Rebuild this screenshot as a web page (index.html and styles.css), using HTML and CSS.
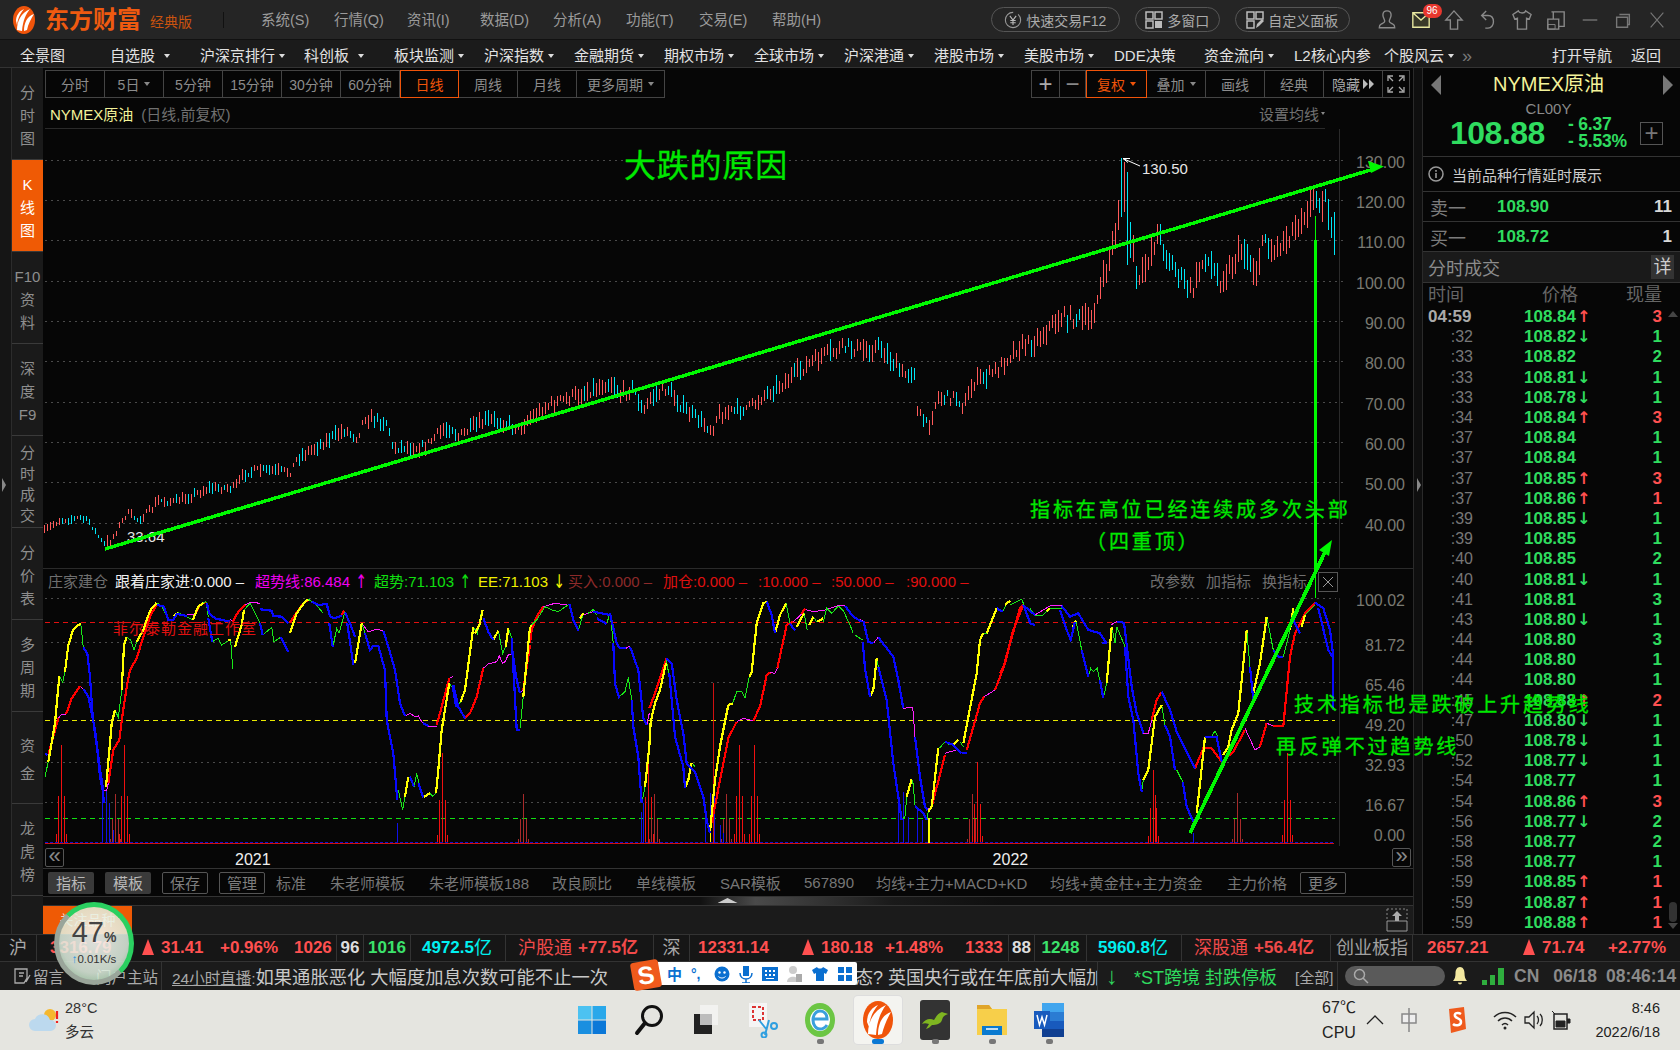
FILE: index.html
```html
<!DOCTYPE html>
<html lang="zh-CN">
<head>
<meta charset="utf-8">
<title>东方财富 经典版</title>
<link rel="stylesheet" href="styles.css">
</head>
<body>
<div class="shell">
  <header class="titlebar">
    <svg class="logo" viewBox="0 0 22 28"><ellipse cx="11" cy="14" rx="11" ry="14" fill="#f0540a"/><path d="M4 24C4 15 8 7 17 3C13 8 10 14 9 25Z M11 25C11 17 14 10 21 8C18 13 15 18 14 24Z M3 15C3 10 6 5 11 3C8 7 5 11 4 19Z" fill="#fff"/></svg>
    <span class="brand">东方财富</span>
    <span class="edition">经典版</span>
    <span class="title-sep"></span>
    <nav class="menu">
      <span>系统(S)</span><span>行情(Q)</span><span>资讯(I)</span><span>数据(D)</span><span>分析(A)</span><span>功能(T)</span><span>交易(E)</span><span>帮助(H)</span>
    </nav>
    <div class="title-right">
      <span class="pill pill-a"><svg viewBox="0 0 20 20" class="pill-ico"><circle cx="10" cy="10" r="8.5" fill="none" stroke="#999" stroke-width="1.2" stroke-dasharray="40 6"/><path d="M6.500 5.500L10 10l3.500-4.500M10 10v5.500M7 10.500h6M7 13h6" fill="none" stroke="#bbb" stroke-width="1.200"/></svg>快速交易F12</span>
      <span class="pill pill-b"><svg viewBox="0 0 18 18" class="pill-ico"><path d="M1 1h7v7H1zM10 1h7v7h-7zM1 10h7v7H1z" fill="none" stroke="#bbb" stroke-width="1.500"/><path d="M10 10h7v7h-7z" fill="#bbb"/></svg>多窗口</span>
      <span class="pill pill-c"><svg viewBox="0 0 18 18" class="pill-ico"><path d="M1 1h7v7H1zM10 1h7v7h-7zM1 10h7v7H1z" fill="none" stroke="#bbb" stroke-width="1.500"/><path d="M10 17l1-4 5-5 2 2-5 5z" fill="#bbb"/></svg>自定义面板</span>
      <div class="win-icons">
        <span class="wi"><svg viewBox="0 0 22 24"><path d="M11 2c-3 0-4.500 2-4.500 4.500 0 3 2 4.500 2 7 0 1.500-2 2-4 3-1.500.7-2 2-2 4h17c0-2-.5-3.300-2-4-2-1-4-1.500-4-3 0-2.500 2-4 2-7C15.500 4 14 2 11 2z" fill="none" stroke="#8a8a8a" stroke-width="1.500"/></svg></span>
        <span class="wi"><svg viewBox="0 0 22 22"><path d="M2 3h18v16H2zM2 3l9 8 9-8" fill="#3a3a2a" stroke="#e8e8a0" stroke-width="1.500"/></svg><b class="badge">96</b></span>
        <span class="wi"><svg viewBox="0 0 22 24"><path d="M11 2L2 12h5v10h8V12h5z" fill="none" stroke="#8a8a8a" stroke-width="1.500"/></svg></span>
        <span class="wi"><svg viewBox="0 0 22 24"><path d="M9 2L4 7l5 5M4 7h7c5 0 6 4 6 7s-2 7-6 7H8" fill="none" stroke="#8a8a8a" stroke-width="1.500"/></svg></span>
        <span class="wi"><svg viewBox="0 0 22 24"><path d="M7 2L1 6l2 5 3-1v12h10V10l3 1 2-5-6-4c-.5 3-7 3-8 0z" fill="none" stroke="#8a8a8a" stroke-width="1.500"/></svg></span>
        <span class="wi"><svg viewBox="0 0 22 24"><path d="M8 3h12v16h-6M2 11h12v11H2zM6 3h2v8" fill="none" stroke="#8a8a8a" stroke-width="1.500"/><path d="M2 17h8v5H2z" fill="none" stroke="#8a8a8a"/></svg></span>
        <span class="wi"><svg viewBox="0 0 22 24"><path d="M3 12h16" stroke="#777" stroke-width="1.500"/></svg></span>
        <span class="wi"><svg viewBox="0 0 22 24"><path d="M7 6h11v11h-2M4 9h12v11H4z" fill="none" stroke="#777" stroke-width="1.500"/></svg></span>
        <span class="wi"><svg viewBox="0 0 22 24"><path d="M4 4l14 16M18 4L4 20" stroke="#777" stroke-width="1.200"/></svg></span>
      </div>
    </div>
  </header>

  <nav class="navbar">
    <span class="nv">全景图</span><span class="nv">自选股<i class="dd"></i></span><span class="nv nv-w">沪深京排行<i class="dd dd-n"></i></span><span class="nv">科创板<i class="dd"></i></span><span class="nv">板块监测<i class="dd dd-n"></i></span><span class="nv">沪深指数<i class="dd dd-n"></i></span><span class="nv">金融期货<i class="dd dd-n"></i></span><span class="nv">期权市场<i class="dd dd-n"></i></span><span class="nv">全球市场<i class="dd dd-n"></i></span><span class="nv">沪深港通<i class="dd dd-n"></i></span><span class="nv">港股市场<i class="dd dd-n"></i></span><span class="nv">美股市场<i class="dd dd-n"></i></span><span class="nv">DDE决策</span><span class="nv">资金流向<i class="dd dd-n"></i></span><span class="nv">L2核心内参</span><span class="nv nv-s">个股风云<i class="dd dd-n"></i></span><span class="nv-more">»</span>
    <span class="nv-right">打开导航</span><span class="nv-right nv-back">返回</span>
  </nav>

  <div class="workspace">
    <div class="edge"><i class="handle"></i></div>
    <aside class="rail">
      <div class="rc"><span>分</span><span>时</span><span>图</span></div>
      <div class="rc rc-on"><span>K</span><span>线</span><span>图</span></div>
      <div class="rc"><span>F10</span><span>资</span><span>料</span></div>
      <div class="rc"><span>深</span><span>度</span><span>F9</span></div>
      <div class="rc rc-4"><span>分</span><span>时</span><span>成</span><span>交</span></div>
      <div class="rc"><span>分</span><span>价</span><span>表</span></div>
      <div class="rc"><span>多</span><span>周</span><span>期</span></div>
      <div class="rc rc-2"><span>资</span><span>金</span></div>
      <div class="rc"><span>龙</span><span>虎</span><span>榜</span></div>
    </aside>

    <main class="main">
      <div class="toolbar">
        <div class="tgroup">
          <span class="tb">分时</span><span class="tb">5日<i class="dd dd-g"></i></span><span class="tb">5分钟</span><span class="tb">15分钟</span><span class="tb">30分钟</span><span class="tb">60分钟</span><span class="tb tb-on">日线</span><span class="tb">周线</span><span class="tb">月线</span><span class="tb tb-more">更多周期<i class="dd dd-g"></i></span>
        </div>
        <div class="tgroup">
          <span class="tb tb-plus">+</span><span class="tb tb-minus">−</span><span class="tb tb-on tb-fq">复权<i class="dd dd-o"></i></span><span class="tb">叠加<i class="dd dd-g"></i></span><span class="tb">画线</span><span class="tb">经典</span><span class="tb tb-hide">隐藏<svg class="ff" viewBox="0 0 11 10" width="11" height="10"><path d="M0 0l5 5-5 5zM6 0l5 5-5 5z" fill="#bbb"/></svg></span>
          <span class="tb tb-full"><svg viewBox="0 0 18 18" width="18" height="18"><path d="M1 6V1h5M12 1h5v5M17 12v5h-5M6 17H1v-5M2 2l4 4M16 2l-4 4M16 16l-4-4M2 16l4-4" fill="none" stroke="#aaa" stroke-width="1.300"/></svg></span>
        </div>
      </div>
      <div class="chart-head">
        <span class="sym">NYMEX原油</span><span class="sym-sub">(日线,前复权)</span>
        <span class="ma-set">设置均线<i class="dd dd-g dd-s"></i></span>
      </div>

      <svg id="price" class="price" viewBox="43 129 1370 439" width="1370" height="439">
        <g class="grid">
          <path d="M45 160.500H1343M45 200.500H1343M45 240.500H1343M45 281.500H1343M45 321.500H1343M45 361.500H1343M45 402.500H1343M45 442.500H1343M45 482.500H1343M45 523.500H1343"/>
        </g>
        <path class="axis-line" d="M1339.500 129V568"/>
        <g class="axis">
          <text x="1405" y="168">130.00</text><text x="1405" y="208">120.00</text><text x="1405" y="248">110.00</text><text x="1405" y="289">100.00</text><text x="1405" y="329">90.00</text><text x="1405" y="369">80.00</text><text x="1405" y="410">70.00</text><text x="1405" y="450">60.00</text><text x="1405" y="490">50.00</text><text x="1405" y="531">40.00</text>
        </g>
        <g id="candles"></g>
        <path class="hl-arrow" d="M1140 166L1123 158.500M1123 158.500l7 0M1123 158.500l5 4"/>
        <text class="hl-val" x="1142" y="174">130.50</text>
        <text class="hl-val" x="127" y="542">33.64</text>
      </svg>

      <div class="ind-head">
        <span class="ih ih-name">庄家建仓</span>
        <span class="ih ih-w">跟着庄家进:0.000 –</span>
        <span class="ih ih-m">超势线:86.484 <b>↑</b></span>
        <span class="ih ih-g">超势:71.103 <b>↑</b></span>
        <span class="ih ih-y">EE:71.103 <b>↓</b></span>
        <span class="ih ih-d">买入:0.000 –</span>
        <span class="ih ih-r">加仓:0.000 –</span>
        <span class="ih ih-p1">:10.000 –</span>
        <span class="ih ih-p2">:50.000 –</span>
        <span class="ih ih-p3">:90.000 –</span>
        <span class="ih-acts"><span>改参数</span><span>加指标</span><span>换指标</span></span>
        <span class="ih-x"><svg viewBox="0 0 12 12" width="12" height="12"><path d="M1 1l10 10M11 1L1 11" stroke="#999" stroke-width="1"/></svg></span>
      </div>

      <svg id="ind" class="ind" viewBox="43 598 1370 248" width="1370" height="248">
        <g class="grid">
          <path d="M45 598.500H1336M45 642.500H1336M45 682.500H1336M45 762.500H1336M45 802.500H1336"/>
        </g>
        <path class="axis-line" d="M1339.500 598V846"/>
        <path class="d-red" d="M45 622.500H1335"/>
        <path class="d-yel" d="M45 720.500H1335"/>
        <path class="d-grn" d="M45 818.500H1335"/>
        <g class="axis">
          <text x="1405" y="606">100.02</text><text x="1405" y="651">81.72</text><text x="1405" y="691">65.46</text><text x="1405" y="731">49.20</text><text x="1405" y="771">32.93</text><text x="1405" y="811">16.67</text><text x="1405" y="841">0.00</text>
        </g>
        <g id="spikes"></g>
        <g id="lines"></g>
        <path class="base-b" d="M45 842.500H1334"/>
        <path class="base-r" d="M45 843.500H1334"/>
        <text class="ind-note" x="113" y="634">菲尔泰勒金融工作室</text>
      </svg>

      <div class="date-row">
        <span class="pg">«</span>
        <span class="yr yr-a">2021</span>
        <span class="yr yr-b">2022</span>
        <span class="pg pg-r">»</span>
      </div>

      <div class="tpl">
        <span class="tp tp-on">指标</span><span class="tp tp-on">模板</span><span class="tp tp-bd">保存</span><span class="tp tp-bd">管理</span>
        <span class="tt t1">标准</span><span class="tt t2">朱老师模板</span><span class="tt t3">朱老师模板188</span><span class="tt t4">改良顾比</span><span class="tt t5">单线模板</span><span class="tt t6">SAR模板</span><span class="tt t7">567890</span><span class="tt t8">均线+主力+MACD+KD</span><span class="tt t9">均线+黄金柱+主力资金</span><span class="tt t10">主力价格</span>
        <span class="tp tp-bd tp-more">更多</span>
      </div>
      <div class="strip"><i class="strip-arrow"></i></div>
      <div class="subpanel">
        <span class="sub-tab">关注品种</span>
        <svg class="sub-ico" viewBox="0 0 22 24" width="22" height="24"><path d="M1 1h20M1 1v10M21 1v10" fill="none" stroke="#888" stroke-dasharray="2 2"/><path d="M1 13h20v10H1z" fill="none" stroke="#999"/><path d="M11 3l-5 5h3v5h4V8h3z" fill="#aaa"/></svg>
      </div>
    </main>

    <div class="edge edge-r"><i class="handle"></i></div>

    <aside class="quote">
      <div class="q-head">
        <div class="q-name"><i class="tri tri-l"></i><span>NYMEX原油</span><i class="tri tri-r"></i></div>
        <div class="q-code">CL00Y</div>
        <div class="q-price">
          <span class="q-last">108.88</span>
          <span class="q-delta"><span>- 6.37</span><span>- 5.53%</span></span>
          <span class="q-add">+</span>
        </div>
      </div>
      <div class="q-info"><svg viewBox="0 0 16 16" width="16" height="16"><circle cx="8" cy="8" r="7" fill="none" stroke="#999" stroke-width="1.500"/><path d="M8 4v1.800M8 7v5" stroke="#999" stroke-width="1.600"/></svg>当前品种行情延时展示</div>
      <div class="q-book"><span class="bk">卖一</span><span class="bp">108.90</span><span class="bq">11</span></div>
      <div class="q-book"><span class="bk">买一</span><span class="bp">108.72</span><span class="bq">1</span></div>
      <div class="q-title">分时成交<span class="q-det">详</span></div>
      <div class="q-cols"><span>时间</span><span>价格</span><span>现量</span></div>
      <div class="trades">
        <div class="tr tr-first"><span class="t">04:59</span><span class="p">108.84</span><span class="a u">↑</span><span class="n u">3</span></div>
        <div class="tr"><span class="t">:32</span><span class="p">108.82</span><span class="a">↓</span><span class="n">1</span></div>
        <div class="tr"><span class="t">:33</span><span class="p">108.82</span><span class="a"></span><span class="n">2</span></div>
        <div class="tr"><span class="t">:33</span><span class="p">108.81</span><span class="a">↓</span><span class="n">1</span></div>
        <div class="tr"><span class="t">:33</span><span class="p">108.78</span><span class="a">↓</span><span class="n">1</span></div>
        <div class="tr"><span class="t">:34</span><span class="p">108.84</span><span class="a u">↑</span><span class="n u">3</span></div>
        <div class="tr"><span class="t">:37</span><span class="p">108.84</span><span class="a"></span><span class="n">1</span></div>
        <div class="tr"><span class="t">:37</span><span class="p">108.84</span><span class="a"></span><span class="n">1</span></div>
        <div class="tr"><span class="t">:37</span><span class="p">108.85</span><span class="a u">↑</span><span class="n u">3</span></div>
        <div class="tr"><span class="t">:37</span><span class="p">108.86</span><span class="a u">↑</span><span class="n u">1</span></div>
        <div class="tr"><span class="t">:39</span><span class="p">108.85</span><span class="a">↓</span><span class="n">1</span></div>
        <div class="tr"><span class="t">:39</span><span class="p">108.85</span><span class="a"></span><span class="n">1</span></div>
        <div class="tr"><span class="t">:40</span><span class="p">108.85</span><span class="a"></span><span class="n">2</span></div>
        <div class="tr"><span class="t">:40</span><span class="p">108.81</span><span class="a">↓</span><span class="n">1</span></div>
        <div class="tr"><span class="t">:41</span><span class="p">108.81</span><span class="a"></span><span class="n">3</span></div>
        <div class="tr"><span class="t">:43</span><span class="p">108.80</span><span class="a">↓</span><span class="n">1</span></div>
        <div class="tr"><span class="t">:44</span><span class="p">108.80</span><span class="a"></span><span class="n">3</span></div>
        <div class="tr"><span class="t">:44</span><span class="p">108.80</span><span class="a"></span><span class="n">1</span></div>
        <div class="tr"><span class="t">:44</span><span class="p">108.80</span><span class="a"></span><span class="n">1</span></div>
        <div class="tr"><span class="t">:45</span><span class="p">108.88</span><span class="a u">↑</span><span class="n u">2</span></div>
        <div class="tr"><span class="t">:47</span><span class="p">108.80</span><span class="a">↓</span><span class="n">1</span></div>
        <div class="tr"><span class="t">:50</span><span class="p">108.78</span><span class="a">↓</span><span class="n">1</span></div>
        <div class="tr"><span class="t">:52</span><span class="p">108.77</span><span class="a">↓</span><span class="n">1</span></div>
        <div class="tr"><span class="t">:54</span><span class="p">108.77</span><span class="a"></span><span class="n">1</span></div>
        <div class="tr"><span class="t">:54</span><span class="p">108.86</span><span class="a u">↑</span><span class="n u">3</span></div>
        <div class="tr"><span class="t">:56</span><span class="p">108.77</span><span class="a">↓</span><span class="n">2</span></div>
        <div class="tr"><span class="t">:58</span><span class="p">108.77</span><span class="a"></span><span class="n">2</span></div>
        <div class="tr"><span class="t">:58</span><span class="p">108.77</span><span class="a"></span><span class="n">1</span></div>
        <div class="tr"><span class="t">:59</span><span class="p">108.85</span><span class="a u">↑</span><span class="n u">1</span></div>
        <div class="tr"><span class="t">:59</span><span class="p">108.87</span><span class="a u">↑</span><span class="n u">1</span></div>
        <div class="tr"><span class="t">:59</span><span class="p">108.88</span><span class="a u">↑</span><span class="n u">1</span></div>
        <i class="sb-up"></i><i class="sb-thumb"></i><i class="sb-dn"></i>
      </div>
    </aside>
  </div>

  <div class="status">
    <div class="sc sc-mk">沪</div>
    <div class="sc sc-idx"><span class="v1 r">3316.79</span><span class="v2 r"><i class="up"></i>31.41</span><span class="v3 r">+0.96%</span><span class="r">1026</span></div>
    <div class="sc sc-mid">96</div>
    <div class="sc sc-dn">1016</div>
    <div class="sc sc-amt">4972.5<em>亿</em></div>
    <div class="sc sc-north">沪股通<b>+77.5亿</b></div>
    <div class="sc sc-mk">深</div>
    <div class="sc sc-idx"><span class="v1b r">12331.14</span><span class="v2b r"><i class="up"></i>180.18</span><span class="v3b r">+1.48%</span><span class="r">1333</span></div>
    <div class="sc sc-mid">88</div>
    <div class="sc sc-dn">1248</div>
    <div class="sc sc-amt">5960.8<em>亿</em></div>
    <div class="sc sc-north">深股通<b>+56.4亿</b></div>
    <div class="sc sc-cy">创业板指</div>
    <div class="sc sc-idx sc-last"><span class="v1c r">2657.21</span><span class="v2c r"><i class="up"></i>71.74</span><span class="r">+2.77%</span></div>
  </div>

  <div class="ticker">
    <div class="tk-links"><svg viewBox="0 0 18 18" width="18" height="18"><path d="M2 2h12v9l-3 5H2zM6 6h5M6 9h4M13 15l4-7" fill="none" stroke="#aaa" stroke-width="1.300"/></svg><span>留言</span><span class="tk-home">门户主站</span></div>
    <div class="tk-news"><u>24小时直播</u>:<span class="tk-big">如果通胀恶化 大幅度加息次数可能不止一次</span></div>
    <div class="tk-news2">态? 英国央行或在年底前大幅加</div>
    <div class="tk-alert"><b class="ar">↓</b><span class="al-t">*ST跨境 封跌停板</span><span class="al-all">[全部]</span></div>
    <div class="tk-tools">
      <span class="search"><svg viewBox="0 0 16 16" width="16" height="16"><circle cx="6.500" cy="6.500" r="5" fill="none" stroke="#aaa" stroke-width="1.500"/><path d="M10 10l5 5" stroke="#aaa" stroke-width="1.500"/></svg></span>
      <svg class="bell" viewBox="0 0 16 20" width="16" height="20"><path d="M8 1c-3 0-4.500 3-4.500 6S3 13 1 15h14c-2-2-2.500-5-2.500-8S11 1 8 1zM6 16.500a2 2 0 0 0 4 0z" fill="#f3e8a0"/></svg>
      <svg class="sig" viewBox="0 0 22 18" width="22" height="18"><path d="M0 13h5v5H0zM8 8h5v10H8zM16 1h6v17h-6z" fill="#2fae3e"/></svg>
      <span class="clk cn">CN</span><span class="clk">06/18</span><span class="clk">08:46:14</span>
    </div>
  </div>

  <footer class="taskbar">
    <div class="weather">
      <svg viewBox="0 0 34 26" width="34" height="26"><circle cx="23" cy="8" r="6" fill="#f5b82e"/><path d="M8 24a6 6 0 0 1 0-12 8 8 0 0 1 15 1 5.500 5.500 0 0 1 1 11z" fill="#bcd9ee"/><path d="M30 4v8M30 14v2" stroke="#e22" stroke-width="2.200"/></svg>
      <div class="w-text"><span>28°C</span><span>多云</span></div>
    </div>
    <div class="apps">
      <span class="tapp"><svg viewBox="0 0 30 30" width="30" height="30"><path d="M1 1h13.500v13.500H1z" fill="#4cc2f1"/><path d="M15.500 1H29v13.500H15.500z" fill="#29a8ea"/><path d="M1 15.500h13.500V29H1z" fill="#1a8fe0"/><path d="M15.500 15.500H29V29H15.500z" fill="#0b78d8"/></svg></span>
      <span class="tapp"><svg viewBox="0 0 30 32" width="30" height="32"><circle cx="18" cy="12" r="9.500" fill="none" stroke="#111" stroke-width="3"/><path d="M11 19L3 29" stroke="#111" stroke-width="4" stroke-linecap="round"/></svg></span>
      <span class="tapp"><svg viewBox="0 0 30 32" width="30" height="32"><path d="M9 1h18v20H9z" fill="#f2f2f0"/><path d="M3 10h18v20H3z" fill="#222"/><path d="M9 10h12v11H9z" fill="#bdbdbd"/></svg></span>
      <span class="tapp"><svg viewBox="0 0 32 36" width="32" height="36"><path d="M2 1h18v24H2z" fill="#f5f5f5"/><path d="M6 5h10v13H6z" fill="none" stroke="#d33" stroke-width="2" stroke-dasharray="3 2"/><path d="M12 18l8 10M22 18l-4 15" stroke="#2f9fe0" stroke-width="2"/><circle cx="27" cy="24" r="3" fill="none" stroke="#2f9fe0" stroke-width="2"/><circle cx="17" cy="33" r="2.500" fill="none" stroke="#2f9fe0" stroke-width="2"/></svg></span>
      <span class="tapp tapp-dot"><svg viewBox="0 0 32 36" width="32" height="36"><ellipse cx="16" cy="18" rx="15" ry="17" fill="#6cc644"/><ellipse cx="16" cy="18" rx="10" ry="11" fill="#fff"/><path d="M9 17h14c0-5-3-8-7-8s-7 4-7 9 3 9 7 9c3 0 5-1 7-4" fill="none" stroke="#3aa0dc" stroke-width="3"/></svg></span>
      <span class="tapp tapp-active"><svg viewBox="0 0 30 38" width="30" height="38"><ellipse cx="15" cy="19" rx="15" ry="19" fill="#f0540a"/><path d="M5 33C5 20 11 9 23 4C18 11 14 19 13 34Z M15 34C15 23 19 14 28 11C24 18 21 25 19 33Z M4 21C4 13 8 7 15 4C11 9 7 15 6 26Z" fill="#fff"/></svg></span>
      <span class="tapp tapp-dot"><svg viewBox="0 0 30 40" width="30" height="40"><rect width="30" height="40" rx="3" fill="#333"/><path d="M2 24c3-5 8-6 12-4 2-3 4-7 8-8 1 1 5 1 6 2-3 1-5 2-6 6-1 4-6 5-10 5-2 2-3 3-6 4 1-2 2-3 3-5-3-1-5-1-7 0z" fill="#7fb521"/></svg></span>
      <span class="tapp tapp-dot"><svg viewBox="0 0 32 36" width="32" height="36"><path d="M1 3h12l3 4h15v26H1z" fill="#f7cf4a"/><path d="M1 3h12l3 4H1z" fill="#e0a52a"/><path d="M6 24h20v9H6z" fill="#0a7ad0"/><path d="M10 27h12" stroke="#fff" stroke-width="1.500"/></svg></span>
      <span class="tapp tapp-dot"><svg viewBox="0 0 32 36" width="32" height="36"><path d="M9 1h22v34H9z" fill="#2b7cd3"/><path d="M9 1h22v9H9z" fill="#41a5ee"/><path d="M9 19h22v8H9z" fill="#185abd"/><path d="M9 27h22v8H9z" fill="#103f91"/><path d="M1 9h16v18H1z" fill="#185abd"/><path d="M4 13l2.500 10L9 15l2.500 8L14 13" fill="none" stroke="#fff" stroke-width="1.500"/></svg></span>
    </div>
    <div class="tray">
      <div class="cpu"><span>67℃</span><span>CPU</span></div>
      <svg class="tr-ic chev" viewBox="0 0 18 10" width="18" height="10"><path d="M1 9l8-8 8 8" fill="none" stroke="#222" stroke-width="1.300"/></svg>
      <svg class="tr-ic zh" viewBox="0 0 18 26" width="18" height="26"><path d="M9 1v24M2 7h14v9H2z" fill="#eee" stroke="#888" stroke-width="1.500"/></svg>
      <svg class="tr-ic sg" viewBox="0 0 20 26" width="20" height="26"><path d="M3 2l15-2 2 22-15 4z" fill="#ef5a1c"/><path d="M15 7c-3-2-7-1-6 2s6 2 6 6-6 4-8 2" fill="none" stroke="#fff" stroke-width="2.500"/></svg>
      <svg class="tr-ic wf" viewBox="0 0 24 20" width="24" height="20"><path d="M1 7c6-6 16-6 22 0M5 11c4-4 10-4 14 0M9 15c2-2 4-2 6 0" fill="none" stroke="#222" stroke-width="1.500"/><circle cx="12" cy="18" r="1.500" fill="#222"/></svg>
      <svg class="tr-ic sp" viewBox="0 0 20 20" width="20" height="20"><path d="M1 7h4l5-5v16l-5-5H1zM13 6c2 2 2 6 0 8M16 4c3 3 3 9 0 12" fill="none" stroke="#222" stroke-width="1.300"/></svg>
      <svg class="tr-ic bt" viewBox="0 0 22 22" width="22" height="22"><path d="M4 5h13v15H4z" fill="none" stroke="#222" stroke-width="1.500"/><path d="M6 12h9v6H6zM2 2l3 3M17 10h3v4h-3" fill="#222" stroke="#222"/></svg>
      <div class="clock"><span>8:46</span><span>2022/6/18</span></div>
    </div>
  </footer>

  <svg class="overlay" viewBox="0 0 1680 1050" width="1680" height="1050">
    <text class="note note-t" x="624" y="177">大跌的原因</text>
    <path class="trend" d="M105 549L1374 169"/>
    <path class="trend-h" d="M1384 166.500L1368 161l3 12z"/>
    <path class="vert-t" d="M1315.500 216V240M1315.500 570V598"/>
    <path class="vert" d="M1315.500 240V570"/>
    <path class="trend2" d="M1190 833L1326 550"/>
    <path class="trend-h" d="M1332 540L1319 550l10 6z"/>
    <text class="note" x="1030" y="517">指标在高位已经连续成多次头部</text>
    <text class="note" x="1086" y="549">（四重顶）</text>
    <text class="note" x="1294" y="712">技术指标也是跌破上升趋势线</text>
    <text class="note" x="1276" y="754">再反弹不过趋势线</text>
  </svg>

  <div class="gauge">
    <div class="g-pct">47<small>%</small></div>
    <div class="g-net"><b>↑</b>0.01K/s</div>
  </div>

  <div class="ime">
    <span class="ime-s">S</span>
    <span class="ime-bar">
      <b class="ime-z">中</b><b class="ime-p">°,</b>
      <svg viewBox="0 0 16 16" width="16" height="16"><circle cx="8" cy="8" r="7.500" fill="#0a6fd0"/><circle cx="5.500" cy="6.500" r="1.200" fill="#fff"/><circle cx="10.500" cy="6.500" r="1.200" fill="#fff"/><path d="M4.500 10.500c2 2 5 2 7 0" stroke="#fff" fill="none"/></svg>
      <svg viewBox="0 0 14 18" width="14" height="18"><path d="M4 1h6v10H4z" fill="#0a6fd0"/><path d="M1 8c0 8 12 8 12 0M7 14v4M3 18h8" stroke="#0a6fd0" fill="none" stroke-width="1.500"/></svg>
      <svg viewBox="0 0 16 16" width="16" height="16"><path d="M0 1h16v14H0z" fill="#0a6fd0"/><path d="M3 4h2v2H3zM7 4h2v2H7zM11 4h2v2h-2zM3 8h2v2H3zM7 8h2v2H7zM11 8h2v2h-2zM4 12h8v1H4z" fill="#fff"/></svg>
      <svg viewBox="0 0 16 18" width="16" height="18"><circle cx="6" cy="5" r="4" fill="#ccc"/><path d="M0 17c0-7 12-7 12 0z" fill="#ccc"/><path d="M9 9h6v8H9z" fill="#aaa"/></svg>
      <svg viewBox="0 0 16 16" width="16" height="16"><path d="M5 1L0 4l2 4 2-1v8h8V7l2 1 2-4-5-3c-1 2-5 2-6 0z" fill="#0a6fd0"/></svg>
      <svg viewBox="0 0 16 16" width="16" height="16"><path d="M1 1h6v6H1zM9 1h6v6H9zM1 9h6v6H1zM9 9h6v6H9z" fill="#0a6fd0"/></svg>
    </span>
  </div>
</div>
<script src="chart.js"></script>
</body>
</html>
```

FILE: styles.css
```css
*{box-sizing:border-box}
html,body{margin:0;height:100%;background:#060606}
body{font-family:"Liberation Sans","Noto Sans CJK SC",sans-serif;color:#aaa;overflow:hidden}
.shell{position:relative;width:1680px;height:1050px;display:flex;flex-direction:column;overflow:hidden}
i,em{font-style:normal}

/* title */
.titlebar{height:40px;flex:none;display:flex;align-items:center;padding-left:13px;background:#252525;border-bottom:1px solid #111}
.logo{width:22px;height:28px;flex:none}
.brand{margin-left:10px;width:95px;font-size:24px;line-height:30px;font-weight:700;color:#ef5a10;white-space:nowrap}
.edition{margin-left:10px;font-size:14px;line-height:20px;color:#c9530f;padding-top:4px;width:43px;white-space:nowrap}
.title-sep{margin-left:30px;width:1px;height:16px;background:#111}
.menu{margin-left:37px;display:flex;font-size:14.500px;line-height:20px;color:#9b9b9b;white-space:nowrap}
.menu span{width:73px;flex:none}
.title-right{margin-left:auto;display:flex;align-items:center;padding-right:6px}
.pill{height:25px;border:1px solid #555;border-radius:13px;display:flex;align-items:center;justify-content:center;gap:4px;font-size:14px;color:#aaa;white-space:nowrap}
.pill-a{width:129px}
.pill-b{width:85px;margin-left:15px}
.pill-c{width:115px;margin-left:15px}
.pill-ico{width:18px;height:18px;flex:none}
.win-icons{display:flex;margin-left:20px}
.wi{position:relative;width:33.800px;height:30px;display:flex;align-items:center;justify-content:center}
.wi svg{width:20px;height:22px}
.badge{position:absolute;left:19px;top:-1px;min-width:19px;height:14px;border-radius:7px;background:#e8372e;color:#fff;font-size:10px;font-weight:400;line-height:14px;text-align:center}

/* nav */
.navbar{height:28px;flex:none;display:flex;align-items:center;padding-left:20px;padding-top:5px;background:#1b1b1b;border-bottom:1px solid #333;font-size:15px;line-height:20px;color:#e2e2e2;white-space:nowrap}
.nv{width:90px;flex:none;display:flex;align-items:center}
.nv-w{width:104px}
.nv-s{width:78px}
.nv-more{color:#777;font-size:18px;width:90px}
.nv-right{width:79px}
.nv-back{width:auto}
.dd{display:inline-block;width:0;height:0;margin-left:9px;border-left:3.500px solid transparent;border-right:3.500px solid transparent;border-top:4px solid #ddd}
.dd-n{margin-left:4px}
.dd-g{border-top-color:#888;margin-left:5px}
.dd-o{border-top-color:#f0540a;margin-left:5px}
.dd-s{margin-left:2px;border-left-width:2.500px;border-right-width:2.500px;border-top-width:3px}

/* workspace */
.workspace{height:866px;flex:none;display:flex;background:#060606}
.edge{width:11px;flex:none;background:#151515;display:flex;align-items:center;justify-content:flex-start}
.edge-r{width:9px;background:#0f0f0f;border-left:1px solid #2a2a2a;justify-content:center}
.handle{display:block;width:4px;height:14px;margin:0 0 0 2px;background:#888;clip-path:polygon(0 0,100% 50%,0 100%);margin-top:-32px}
.rail{width:32px;flex:none;background:#1a1a1a;border-left:1px solid #2c2c2c;display:flex;flex-direction:column}
.rc{height:92px;flex:none;display:flex;flex-direction:column;align-items:center;justify-content:center;padding-top:4px;border-bottom:1px solid #3a3a3a;font-size:15px;line-height:23px;color:#8e8e8e}
.rc span{height:23px}
.rc-on{background:#ef5a05;color:#fff}
.rc-4{line-height:21px}
.rc-4 span{height:21px}
.rc-2 span{height:28px;line-height:28px}
.main{width:1370px;flex:none;display:flex;flex-direction:column;background:#060606;overflow:hidden}

.toolbar{height:28px;margin-top:2px;flex:none;display:flex;justify-content:space-between;padding:0 3px 0 2px}
.tgroup{display:flex;border:1px solid #444}
.tb{width:59px;display:flex;align-items:center;justify-content:center;border-right:1px solid #444;font-size:14px;color:#8c8c8c;white-space:nowrap}
.tb:last-child{border-right:0}
.tb-more{width:87px}
.tb-on{border:1px solid #f0540a;color:#f0540a;margin:-1px 0}
.tb-plus{width:28px;font-size:24px;font-weight:300;color:#aaa}
.tb-minus{width:26px;font-size:24px;color:#888}
.tb-fq{width:61px}
.tb-hide{width:59px;color:#aaa}
.ff{flex:none;margin-left:3px}
.tb-full{width:26px}

.chart-head{height:31px;flex:none;margin:0 88px 0 2px;display:flex;align-items:center;border-bottom:1px solid #2a2a2a;padding-left:5px;font-size:15px;white-space:nowrap}
.sym{color:#f3f39a;font-size:15px}
.sym-sub{margin-left:8px;color:#707070}
.ma-set{margin-left:auto;color:#707070;margin-right:0;display:flex;align-items:center}

.price{display:block;flex:none;overflow:visible}
.ind{display:block;flex:none;overflow:visible}
.grid path{stroke:#4a4a4a;stroke-width:1;stroke-dasharray:2 4;fill:none;shape-rendering:crispEdges}
.axis-line{stroke:#2a2a2a;stroke-width:1;shape-rendering:crispEdges}
.axis text{fill:#7a7a72;font-size:16px;text-anchor:end}
.hl-arrow{stroke:#fff;stroke-width:1;fill:none}
.hl-val{fill:#e6e6e6;font-size:15px}
.d-red{stroke:#e01010;stroke-dasharray:5 4;stroke-width:1;shape-rendering:crispEdges}
.d-yel{stroke:#e8e800;stroke-dasharray:5 4;stroke-width:1;shape-rendering:crispEdges}
.d-grn{stroke:#10e010;stroke-dasharray:5 4;stroke-width:1;shape-rendering:crispEdges}
.base-b{stroke:#1010d0;stroke-width:1;stroke-dasharray:3 2;shape-rendering:crispEdges}
.base-r{stroke:#d01010;stroke-width:1;shape-rendering:crispEdges}
.ind-note{fill:#e01010;font-size:15px;letter-spacing:1px}

.ind-head{height:30px;flex:none;display:flex;align-items:center;border-top:1px solid #2a2a2a;font-size:15px;line-height:20px;white-space:nowrap;padding:0 75px 4px 5px}
.ih b{font-family:"DejaVu Sans",sans-serif;font-weight:400;font-size:17px;line-height:16px;display:inline-block;transform:scale(.8,1.1)}
.ih-name{width:67px;color:#6f6f6f}
.ih-w{width:140px;color:#f0f0f0}
.ih-m{width:119px;color:#f000f0}
.ih-g{width:104px;color:#10e010}
.ih-y{width:90px;color:#f0f000}
.ih-d{width:95px;color:#8c2a2a}
.ih-r{width:95px;color:#e01010}
.ih-p1{width:73px;color:#e01010}
.ih-p2{width:75px;color:#e01010}
.ih-p3{width:90px;color:#e01010}
.ih-acts{margin-left:auto;display:flex;gap:11px;color:#6f6f6f}
.ih-x{margin-left:11px;width:20px;height:20px;border:1px solid #555;display:flex;align-items:center;justify-content:center;flex:none}

.date-row{height:23px;flex:none;display:flex;align-items:center;padding:0 2px;border-bottom:1px solid #333;font-size:14px;color:#ddd}
.pg{width:19px;height:19px;border:1px solid #555;border-radius:2px;font-size:22px;line-height:13px;text-align:center;color:#888;flex:none}
.pg-r{margin-left:auto}
.yr{color:#eee;font-size:16px;line-height:18px;margin-top:5px}
.yr-a{margin-left:171px}
.yr-b{margin-left:722px}

.tpl{height:28px;flex:none;display:flex;align-items:center;padding-left:5px;border-bottom:1px solid #333;font-size:15px;color:#767676;white-space:nowrap}
.tp{width:46px;height:22px;display:flex;align-items:center;justify-content:center;margin-right:11px;border-radius:2px;flex:none}
.tp-on{background:#3a3a3a;color:#b8b8b8}
.tp-bd{border:1px solid #555;color:#7e7e7e}
.tp-more{margin-left:20px}
.t1{width:54px}.t2{width:99px}.t3{width:123px}.t4{width:84px}.t5{width:84px}.t6{width:84px}.t7{width:72px}.t8{width:174px}.t9{width:177px}.t10{width:53px}
.tt{flex:none}
.strip{height:9px;flex:none;background:linear-gradient(90deg,#0f0f0f 0,#111 48%,#4a4a4a 52%,#1a1a1a 62%,#0f0f0f 70%);border-bottom:1px solid #333;display:flex;justify-content:center}
.strip-arrow{display:block;width:20px;height:5px;background:#ccc;clip-path:polygon(0 100%,50% 0,100% 100%);margin-top:1px;margin-left:-1px}
.subpanel{height:28px;flex:none;display:flex;justify-content:space-between;align-items:center;background:#1b1b1b;padding-right:5px}
.sub-tab{width:89px;height:28px;background:#ef5a05;color:#f5d8c4;margin-left:0;font-size:14px;line-height:28px;text-align:center;flex:none}
.sub-ico{flex:none}

/* quote */
.quote{width:258px;flex:none;background:#060606;border-left:1px solid #2a2a2a;display:flex;flex-direction:column;white-space:nowrap}
.q-head{height:89px;flex:none;border-bottom:1px solid #333;position:relative}
.q-name{height:28px;margin-top:2px;display:flex;align-items:center;justify-content:center;color:#f3f39a;font-size:20px;line-height:28px;position:relative;padding-right:6px}
.tri{position:absolute;top:5px;width:10px;height:20px;background:#777}
.tri-l{left:8px;clip-path:polygon(100% 0,0 50%,100% 100%)}
.tri-r{right:7px;clip-path:polygon(0 0,100% 50%,0 100%)}
.q-code{text-align:center;font-size:15px;line-height:20px;color:#8a8a8a;padding-right:6px;margin-top:1px}
.q-price{display:flex;align-items:center;padding-left:27px;height:34px;margin-top:-3px;color:#2fdc5f}
.q-last{font-size:32px;line-height:34px;width:118px;font-weight:700;letter-spacing:-.5px}
.q-delta{display:flex;flex-direction:column;font-size:17.500px;line-height:17px;font-weight:700;width:72px;flex:none;letter-spacing:-.2px}
.q-add{width:23px;height:23px;border:1px solid #555;color:#777;font-size:24px;line-height:19px;text-align:center;flex:none}
.q-info{height:35px;flex:none;display:flex;align-items:center;gap:8px;padding-left:5px;border-bottom:1px solid #333;font-size:15px;color:#ccc}
.q-book{height:30px;flex:none;display:flex;align-items:center;border-bottom:1px solid #333;padding:0 8px 0 7px;font-weight:700}
.bk{width:67px;font-size:18px;font-weight:400;color:#7c7c7c}
.bp{width:70px;color:#2fdc5f;font-size:17px}
.bq{margin-left:auto;color:#d8d8d8;font-size:17px}
.q-title{height:31px;flex:none;background:#1a1a1a;border-bottom:1px solid #333;display:flex;align-items:center;justify-content:space-between;padding:0 6px 0 5px;font-size:18px;color:#8c8c8c}
.q-det{width:23px;height:24px;background:#333;color:#ccc;font-size:18px;line-height:24px;text-align:center}
.q-cols{height:24px;flex:none;display:flex;padding-left:5px;font-size:18px;line-height:24px;color:#666}
.q-cols span:nth-child(1){width:114px}
.q-cols span:nth-child(2){width:84px}
.trades{flex:1;position:relative;overflow:hidden}
.tr{height:20.200px;display:grid;grid-template-columns:45px 103px 18px 1fr;padding:0 18px 0 5px;align-items:center;font-size:17px;line-height:20px;font-weight:700;color:#2fdc5f}
.t{text-align:right;font-weight:400;color:#777;font-size:16px}
.p{text-align:right}
.tr-first .t{text-align:left;font-weight:700;color:#aaa;font-size:17px}
.a{padding-left:1px;font-family:"DejaVu Sans",sans-serif;font-size:16px;font-weight:700}
.n{text-align:right}
.u{color:#ff5050}
.sb-up,.sb-dn{position:absolute;right:2px;width:10px;height:6px;background:#444;clip-path:polygon(0 100%,50% 0,100% 100%)}
.sb-up{top:4px}
.sb-dn{bottom:5px;transform:rotate(180deg)}
.sb-thumb{position:absolute;right:3px;bottom:12px;width:8px;height:20px;border-radius:4px;background:#333}

/* status */
.status{height:27px;flex:none;display:grid;grid-template-columns:37px 300px 27px 47px 95px 148px 36px 319px 26px 52px 95px 149px 82px 267px;background:#161616;border-top:1px solid #333;font-size:17px;line-height:26px;font-weight:700;white-space:nowrap}
.sc{border-right:1px solid #333;display:flex;align-items:center;overflow:hidden}
.sc-mk{justify-content:center;font-weight:400;font-size:18px;color:#a8a8a8}
.sc-idx{padding-left:13px}
.sc-idx:nth-child(8){padding-left:8px}
.sc-last{padding-left:14px;border-right:0}
.r{color:#ff5050;flex:none}
.v1{width:92px}.v2{width:78px}.v3{width:74px}
.v1b{width:104px}.v2b{width:83px}.v3b{width:80px}
.v1c{width:96px}.v2c{width:85px}
.up{display:inline-block;width:0;height:0;border-left:6.500px solid transparent;border-right:6.500px solid transparent;border-bottom:16px solid #ff5050;margin-right:7px;vertical-align:-2px}
.sc-mid{color:#ddd;justify-content:center}
.sc-dn{color:#3ce36c;justify-content:center}
.sc-amt{color:#00f0f0;padding-left:11px}
.sc-amt em{font-weight:400;font-size:18px}
.sc-north{color:#f04a4a;font-weight:400;font-size:18px;padding-left:12px}
.sc-north b{margin-left:6px;font-size:17px}
.sc-cy{font-weight:400;font-size:18px;color:#a0a0a0;padding-left:5px}

/* ticker */
.ticker{height:29px;flex:none;display:flex;align-items:center;background:#1b1b1b;border-top:1px solid #333;font-size:15.500px;white-space:nowrap;color:#aaa;position:relative}
.tk-links{width:162px;flex:none;display:flex;align-items:center;gap:2px;padding-left:13px;border-right:1px solid #333;height:28px}
.tk-home{margin-left:30px;color:#aaa}
.tk-news{width:463px;flex:none;padding-left:10px;display:flex;align-items:baseline;overflow:hidden}
.tk-big{font-size:18.300px;color:#c8c8c8}
.tk-news2{width:472px;flex:none;padding-left:230px;font-size:18px;color:#c8c8c8;overflow:hidden}
.tk-alert{width:241px;flex:none;height:28px;display:flex;align-items:center;border-left:1px solid #333;padding-left:8px;margin-left:0;border-right:1px solid #333}
.ar{color:#2fd05a;font-size:24px;width:28px;font-weight:700}
.al-t{color:#2fdc5f;font-size:18px;width:161px}
.al-all{font-size:15px;color:#a8a8a8}
.tk-tools{flex:1;display:flex;align-items:center;padding-left:7px}
.search{width:100px;height:20px;border-radius:10px;background:#5a5a5a;display:flex;align-items:center;padding-left:8px;flex:none}
.bell{margin-left:7px;flex:none}
.sig{margin-left:14px;flex:none}
.clk{color:#8a8a8a;font-size:17.500px;font-weight:700;margin-left:9px}
.cn{margin-left:10px;margin-right:5px}

/* taskbar */
.taskbar{height:60px;flex:none;display:flex;align-items:center;background:#e5e5e0;padding-left:27px;color:#222;position:relative}
.weather{display:flex;align-items:center;gap:4px;width:536px;flex:none}
.w-text{display:flex;flex-direction:column;font-size:14.500px;line-height:24px;color:#333}
.apps{display:flex;align-items:center;flex:none}
.tapp{position:relative;width:57.200px;height:48px;display:flex;align-items:center;justify-content:center;flex:none;border-radius:4px}
.tapp-dot::after,.tapp-active::after{content:"";position:absolute;left:50%;bottom:0;margin-left:-3px;width:7px;height:5px;border-radius:2px;background:#777}
.tapp-active{width:48px;margin:0 4.600px;background:#f4f4f0;box-shadow:0 0 0 1px #ddd}
.tapp-active::after{background:#0a78d4;width:12px;margin-left:-6px}
.tray{margin-left:auto;display:flex;align-items:center;padding-right:20px;flex:none}
.cpu{display:flex;flex-direction:column;align-items:center;font-size:16px;line-height:25px;color:#222;width:40px}
.tr-ic{flex:none}
.chev{margin-left:7px}
.zh{margin-left:16px}
.sg{margin-left:28px}
.wf{margin-left:27px}
.sp{margin-left:7px}
.bt{margin-left:6px}
.clock{display:flex;flex-direction:column;align-items:flex-end;font-size:14.500px;line-height:24px;color:#222;width:88px}

/* overlays */
.overlay{position:absolute;left:0;top:0;pointer-events:none}
.note{fill:#00e800;stroke:#00e800;stroke-width:.3px;font-size:20px;letter-spacing:2.900px}
.note-t{font-size:32px;letter-spacing:.8px}
.trend{stroke:#00f800;stroke-width:3.500;fill:none;shape-rendering:crispEdges}
.trend2{stroke:#00f800;stroke-width:3.800;fill:none;shape-rendering:crispEdges}
.trend-h{fill:#00f800}
.vert{stroke:#00f800;stroke-width:3;fill:none;shape-rendering:crispEdges}
.vert-t{stroke:#00f800;stroke-width:1;fill:none;shape-rendering:crispEdges}

.gauge{position:absolute;left:54px;top:902px;width:80px;height:83px;border-radius:50%;background:radial-gradient(circle at 50% 45%,rgba(250,250,245,.88) 0,rgba(225,240,225,.85) 62%,rgba(140,200,150,.85) 100%);border:5px solid #2ad060;border-left-color:#9aa59a;border-bottom-color:#9aa59a;display:flex;flex-direction:column;align-items:center;color:#333}
.g-pct{font-size:29px;line-height:30px;margin-top:10px;color:#444;font-weight:400}
.g-pct small{font-size:14px;font-weight:700}
.g-net{font-size:11.500px;line-height:14px;color:#333}
.g-net b{color:#1a90e0}

.ime{position:absolute;left:632px;top:960px;display:flex;align-items:center;height:30px}
.ime-s{width:28px;height:28px;background:#ef5a1c;color:#fff;border-radius:3px;font-size:25px;font-weight:700;line-height:28px;text-align:center;transform:rotate(-10deg);position:relative;z-index:1}
.ime-bar{width:199px;height:23px;background:#fff;display:flex;align-items:center;gap:9px;padding-left:9px;margin-top:-3px;margin-left:-2px;border-radius:0 2px 2px 0}
.ime-z{color:#0a6fd0;font-size:15px}
.ime-p{color:#0a6fd0;font-size:14px;width:14px}
```

FILE: chart.js
```js
(function () {
  var NS = "http://www.w3.org/2000/svg";
  function add(parent, tag, attrs) {
    var el = document.createElementNS(NS, tag);
    for (var k in attrs) el.setAttribute(k, attrs[k]);
    parent.appendChild(el);
    return el;
  }

  /* price path: x, y in page pixels */
  var path = [[45,530],[60,520],[80,518],[89,522],[100,540],[107,547],[118,528],[127,513],[138,520],[154,507],[156,500],[172,502],[188,497],[208,488],[234,488],[245,473],[259,470],[290,472],[297,458],[319,445],[344,430],[357,438],[364,417],[388,423],[391,447],[424,447],[442,430],[451,427],[458,437],[473,427],[487,420],[504,423],[518,430],[527,420],[545,407],[571,397],[598,387],[605,383],[613,383],[620,395],[633,387],[643,413],[650,398],[667,388],[683,408],[712,430],[717,415],[750,407],[767,393],[783,383],[807,365],[820,357],[847,347],[863,350],[880,347],[893,362],[903,375],[915,370],[917,412],[928,427],[937,398],[957,397],[963,407],[973,383],[997,370],[1017,347],[1033,343],[1060,317],[1090,320],[1100,290],[1108,263],[1115,233],[1121,190],[1125,213],[1129,240],[1138,287],[1150,253],[1158,233],[1165,253],[1177,273],[1192,293],[1198,273],[1205,257],[1220,280],[1233,263],[1243,247],[1255,273],[1265,237],[1273,253],[1293,230],[1303,213],[1317,197],[1325,200],[1334,233]];
  function pathY(x) {
    for (var i = 1; i < path.length; i++) {
      if (x <= path[i][0]) {
        var a = path[i - 1], b = path[i];
        return a[1] + (b[1] - a[1]) * (x - a[0]) / (b[0] - a[0]);
      }
    }
    return path[path.length - 1][1];
  }
  var seed = 7;
  function rnd() { seed = (seed * 16807) % 2147483647; return seed / 2147483647; }
  var fixed = {1121:[158,217,0],1124:[162,212,1],1127:[172,265,0],1130:[222,258,0],1133:[235,262,1],1334:[212,255,0],107:[535,549,1]};
  var candles = document.getElementById("candles");
  for (var x = 44; x <= 1334; x += 3) {
    var mid = pathY(x);
    var scale = (640 - mid) / 130;
    var centre = mid + (rnd() - 0.5) * 5 * scale;
    var half = (1.5 + rnd() * 3.5) * scale;
    var top = centre - half;
    var bot = centre + half;
    var slope = pathY(x + 3) - mid;
    var up = rnd() < 0.55 - slope * 0.12;
    var f = fixed[x];
    if (f) { top = f[0]; bot = f[1]; up = !!f[2]; }
    add(candles, "line", {
      x1: x + 0.5, x2: x + 0.5, y1: Math.round(top), y2: Math.round(bot),
      stroke: up ? "#ff5a5a" : "#00e5f5", "stroke-width": 1, "shape-rendering": "crispEdges"
    });
  }

  /* indicator segments in the coordinates of three measuring frames */
  var A = [40, 590], B = [530, 590], C = [1000, 480];
  var segs = [
    [A,"g","15,560 25,515"],[A,"y","25,515 33,470 45,400 58,258"],[A,"g","58,258 68,278 75,245"],[A,"y","75,245 85,165 100,118 122,100"],[A,"g","122,100 130,172"],
    [A,"b","15,492 22,495"],[A,"b","130,172 142,190 150,260 158,380 172,480 180,560 188,600 192,640"],
    [A,"y","198,590 210,460 215,400 225,360"],[A,"g","225,360 235,382 245,300"],[A,"y","245,300 252,165 260,142"],[A,"g","260,142 272,150 282,180 290,155"],[A,"y","290,155 310,120 330,62 350,38"],
    [A,"r","25,495 40,440 55,385"],[A,"m","55,385 65,373 78,373"],[A,"r","78,373 95,325 120,288"],[A,"m","120,288 130,297"],[A,"b","130,297 145,320 155,370 165,420 180,540 190,600"],[A,"m","190,600 200,600 205,580"],
    [A,"r","205,580 220,480 238,450 248,370 262,280 270,240 290,205 310,140 330,80 350,42"],
    [A,"g","350,38 365,50 385,85"],[A,"b","352,45 372,50 385,90 400,90 410,72 440,78"],[A,"m","440,72 465,72"],[A,"r","465,72 480,45 498,36"],[A,"b","500,38 508,70 525,85 555,92 570,95"],[A,"m","570,88 578,95"],[A,"r","578,95 595,65 615,45"],[A,"m","615,45 630,38 650,38 660,42"],[A,"b","660,58 695,62 700,78 725,80 745,100"],[A,"r","750,98 765,75 790,40 805,30"],[A,"b","815,35 835,45 860,42 870,78 880,85 905,78"],[A,"r","905,75 912,62"],[A,"b","915,68 930,100 945,140"],
    [A,"y","400,78 415,68"],[A,"g","415,68 440,80 458,90"],[A,"y","458,90 475,50 490,38"],[A,"g","490,38 498,35 505,80"],[A,"b","505,85 517,155"],[A,"g","517,155 535,145 545,165 565,152"],[A,"y","565,152 572,150"],[A,"g","572,150 578,238"],[A,"y","585,170 605,105 612,60"],[A,"g","612,60 630,40 645,70 660,100"],[A,"b","660,100 668,135"],[A,"g","668,135 695,112 702,155 722,142 745,185"],[A,"b","722,142 745,185"],[A,"y","750,130 770,70 795,35 805,28"],[A,"g","805,28 825,40 850,70"],[A,"b","868,100 878,170"],[A,"g","880,165 890,115 897,130 915,65"],[A,"b","922,100 940,225"],[A,"y","945,220 952,180 965,100"],[A,"g","965,100 975,130"],
    [A,"b","975,130 990,180 1000,168 1015,168 1035,240 1040,390 1060,490 1072,630"],[A,"m","965,100 985,125 1010,118 1030,122"],[A,"b","1030,122 1045,170 1065,240 1080,340 1095,378"],[A,"m","1095,378 1110,370 1125,380 1135,378 1148,400"],[A,"b","1148,400 1165,408"],[A,"m","1165,408 1190,408"],[A,"r","1190,405 1205,350 1228,265"],[A,"m","1228,265 1238,260"],[A,"b","1240,285 1255,350 1275,385"],
    [A,"g","1075,600 1088,660 1095,620"],[A,"y","1095,620 1105,560"],[A,"b","1110,560 1122,590"],[A,"g","1122,590 1130,550 1140,590"],[A,"b","1135,580 1150,622"],[A,"y","1152,620 1170,610"],[A,"g","1170,610 1178,618 1188,610"],[A,"y","1188,610 1195,540 1205,420 1228,280"],[A,"g","1228,280 1235,290"],[A,"b","1238,290 1248,350"],[A,"g","1248,350 1262,335"],[A,"y","1262,335 1275,300 1300,110"],[A,"g","1300,110 1312,130 1325,60"],[A,"y","1305,130 1318,105 1328,60"],[A,"b","1330,85 1345,125 1360,150"],[A,"y","1360,150 1375,122"],[A,"g","1375,122 1388,190 1397,170"],[A,"y","1397,170 1405,115"],[A,"g","1405,115 1415,145"],[A,"b","1415,145 1420,230 1430,420 1440,420"],[A,"g","1440,415 1450,320"],[A,"y","1450,320 1470,110"],
    [A,"r","1275,385 1290,370 1310,320 1330,235"],[A,"m","1330,235 1345,222 1370,215 1378,198 1388,220 1395,215 1405,195 1418,190"],[A,"b","1418,190 1428,260 1440,310"],[A,"m","1440,310 1450,300"],[A,"r","1450,300 1470,165"],
    [B,"y","0,110 5,105"],[B,"r","0,160 5,120 20,80 40,50"],[B,"m","40,50 75,40 110,45"],[B,"g","5,105 20,90 45,50 65,60 85,65 118,42"],[B,"b","118,42 130,90 145,122"],[B,"g","145,122 160,70"],[B,"y","150,85 160,70"],[B,"m","150,78 190,65"],[B,"g","175,70 190,58 200,75"],[B,"b","190,65 240,75"],[B,"b","200,85 230,102"],[B,"g","230,102 240,68 250,160"],[B,"b","240,70 260,160 270,175 288,175"],[B,"m","288,175 300,168"],[B,"b","300,170 325,240 340,385 350,405"],[B,"m","350,405 358,370"],[B,"r","358,355 375,310 410,205"],[B,"g","268,320 285,305 295,262 305,330"],[B,"b","250,160 255,280 268,325"],[B,"b","305,330 310,410 325,500 335,640"],[B,"g","335,640 345,590"],[B,"y","345,590 358,470 362,395 375,340 390,300 408,220"],[B,"g","408,205 418,260"],[B,"b","410,205 425,220 440,330 460,430 470,520 495,545 520,620 530,690 540,730"],[B,"b","418,250 435,440 460,530 465,595"],[B,"y","465,595 475,570 485,518"],[B,"g","485,518 495,530"],
    [B,"y","540,725 555,570 570,470 595,345"],[B,"r","545,700 570,570 595,445 620,395"],[B,"m","620,395 640,385 670,392"],[B,"r","670,392 690,350 710,255 720,248"],[B,"m","720,248 735,250 742,235"],[B,"r","742,235 770,105 790,95"],[B,"m","790,95 815,72"],[B,"r","815,72 825,55"],[B,"m","825,58 850,65 885,60 930,45 945,48"],[B,"b","945,48 970,80 995,95"],[B,"m","975,85 1000,92"],[B,"b","1000,92 1015,155 1030,160"],[B,"m","1030,160 1045,142"],[B,"b","1045,142 1090,200 1105,270 1120,355"],[B,"m","1120,355 1148,352 1155,440"],[B,"b","1155,440 1170,560 1185,650 1192,660"],[B,"m","1192,660 1205,650"],[B,"r","1205,650 1245,495"],[B,"m","1245,490 1285,478 1295,490"],[B,"b","1295,490 1310,490"],[B,"r","1310,480 1350,340 1362,320"],[B,"m","1362,320 1395,300"],[B,"r","1395,300 1420,235 1450,120 1480,45"],[B,"b","1480,45 1500,95"],
    [B,"y","595,345 608,340"],[B,"g","608,340 620,305 635,305 645,325 658,260"],[B,"y","658,260 665,245 680,100 700,40 710,35"],[B,"b","710,35 725,75 735,130"],[B,"y","735,130 750,75 768,40"],[B,"g","768,40 780,100"],[B,"b","780,100 795,122"],[B,"y","800,110 822,70"],[B,"g","822,70 832,120"],[B,"y","838,105 850,80"],[B,"g","850,80 860,95"],[B,"y","862,95 880,85"],[B,"g","880,95 890,55 905,70 925,48 940,62 960,105 970,130"],[B,"g","975,135 998,150"],[B,"b","998,155 1005,235 1020,320"],[B,"y","1020,320 1030,300 1040,205"],[B,"g","1040,205 1045,230"],[B,"b","1045,230 1070,330 1090,520 1105,620 1115,690"],[B,"g","1115,690 1125,680 1130,620"],[B,"y","1130,620 1145,568"],[B,"g","1148,570 1155,645"],[B,"b","1155,648 1180,670 1190,690"],[B,"g","1190,690 1195,665"],[B,"y","1195,665 1205,650 1225,475"],[B,"g","1228,475 1245,455 1260,465"],[B,"b","1245,455 1270,465 1295,490"],[B,"y","1270,465 1285,450"],[B,"g","1290,455 1300,470"],[B,"y","1300,460 1340,250 1350,150 1360,130"],[B,"g","1360,130 1370,130"],[B,"y","1370,130 1400,55"],[B,"b","1400,55 1418,65"],[B,"g","1418,65 1435,32"],[B,"y","1425,45 1440,32"],[B,"g","1440,45 1475,28 1482,45"],
    [C,"g","90,385 105,405 130,405 150,385 185,385"],[C,"r","0,580 15,550 30,490 60,385 70,375"],[C,"b","72,378 105,405"],[C,"b","72,378 90,430 105,435"],[C,"m","105,405 150,378 185,375"],[C,"y","140,395 150,385"],[C,"b","185,378 210,410 235,400 265,450 300,460 320,490"],[C,"b","180,390 200,450 212,480 225,425"],[C,"y","218,440 228,422"],[C,"g","228,422 245,510"],[C,"b","245,510 265,590"],[C,"g","265,590 272,565 280,575 292,565 310,655"],[C,"b","300,600 310,655"],[C,"g","310,655 320,610"],[C,"y","320,610 335,440"],[C,"b","305,490 322,490"],[C,"m","332,435 350,425"],[C,"b","350,425 372,428 395,620 410,700 430,760"],[C,"g","335,440 345,490 350,440 375,500"],[C,"b","375,500 385,650 400,720 415,880 425,935"],[C,"g","425,935 430,900"],[C,"y","430,900 445,870 465,710 485,675"],[C,"m","430,760 445,760 455,720"],[C,"r","455,720 470,660 485,635"],[C,"b","485,635 510,690 530,755 585,865"],[C,"g","485,675 495,735"],[C,"b","495,735 510,770 525,870"],[C,"g","530,870 548,905"],[C,"b","548,905 560,980 580,1025"],[C,"y","590,1000 610,820 615,770"],[C,"g","615,770 635,770 645,752 655,775"],[C,"r","585,865 610,805 635,805 665,845"],[C,"b","615,770 650,772 665,845"],[C,"y","670,825 685,800 695,750 715,700 725,600 740,450"],[C,"g","740,450 750,560"],[C,"b","750,560 760,660"],[C,"y","760,640 780,550 800,410"],[C,"g","800,410 820,510"],[C,"b","820,510 835,530 850,530"],[C,"g","850,530 870,450"],[C,"y","870,450 880,385"],[C,"b","880,420 900,460"],[C,"y","905,440 915,405"],[C,"g","915,405 945,375"],[C,"r","665,845 700,815 735,750"],[C,"m","735,745 765,810"],[C,"m","765,810 780,800"],[C,"r","780,800 800,730"],[C,"m","800,730 820,738"],[C,"r","820,738 850,738 870,530 885,460 915,400 945,368"],[C,"b","945,368 970,385 990,450 1000,530"],[C,"b","955,385 985,510 1000,535 1000,690"]
  ];
  var style = { g: ["#18e818", 1], y: ["#ffff00", 2.2], r: ["#ff0000", 2.2], m: ["#ff20ff", 1], b: ["#0808ff", 2.2] };
  var order = ["m", "r", "g", "y", "b"];
  var lines = document.getElementById("lines");
  order.forEach(function (kind) {
    segs.forEach(function (s) {
      if (s[1] !== kind) return;
      var pts = s[2].split(" ").map(function (p) {
        var v = p.split(",");
        return (s[0][0] + v[0] / 3).toFixed(1) + "," + (s[0][1] + v[1] / 3).toFixed(1);
      }).join(" ");
      add(lines, "polyline", { points: pts, fill: "none", stroke: style[kind][0], "stroke-width": style[kind][1], "shape-rendering": "crispEdges" });
    });
  });

  /* stepped spikes made of nested vertical bars: frame, centre, top, colour */
  var spikes = [
    [A,62,465,"r"],[A,253,465,"r"],[A,225,612,"d"],[A,1205,490,"r"],[A,1450,612,"d"],
    [A,187,600,"b"],[A,198,600,"b"],[A,208,640,"b"],[A,218,720,"b"],[A,1072,700,"b"],
    [B,355,470,"r"],[B,373,612,"d"],[B,333,665,"b"],[B,340,640,"b"],[B,587,612,"d"],[B,628,465,"r"],[B,673,465,"r"],
    [B,1118,605,"b"],[B,1105,640,"b"],[B,1135,680,"b"],[B,1160,660,"b"],[B,1175,690,"b"],[B,525,680,"b"],[B,540,610,"b"],[B,552,570,"b"],[B,570,705,"b"],[B,580,730,"b"],
    [B,1325,612,"d"],[B,1342,515,"r"],[C,460,870,"r"],[C,712,940,"d"],[C,862,820,"r"]
  ];
  var colors = { r: "#f01010", d: "#a82a2a", b: "#1010e8" };
  var sp = document.getElementById("spikes");
  var BASE = 843;
  spikes.forEach(function (s) {
    var cx = Math.round(s[0][0] + s[1] / 3) + 0.5;
    var top = s[0][1] + s[2] / 3;
    var h = BASE - top;
    var d = "M" + cx + " " + BASE + "V" + top;
    if (s[3] !== "b") {
      var m = BASE - h * 0.48, l = BASE - h * 0.09;
      d += "M" + (cx - 3) + " " + BASE + "V" + m + "M" + (cx + 3) + " " + BASE + "V" + m;
      d += "M" + (cx - 5) + " " + BASE + "V" + l + "M" + (cx + 5) + " " + BASE + "V" + l;
    }
    add(sp, "path", { d: d, fill: "none", stroke: colors[s[3]], "stroke-width": 1, "shape-rendering": "crispEdges" });
  });
  [[B, 550, 278, "#d01010"], [B, 540, 690, "#ffff00"], [B, 1198, 685, "#ffff00"], [B, 1195, 685, "#ffff00"], [C, 465, 945, "#f01010"], [C, 580, 1060, "#1010e8"]].forEach(function (s) {
    var cx = Math.round(s[0][0] + s[1] / 3) + 0.5;
    add(sp, "path", { d: "M" + cx + " " + BASE + "V" + (s[0][1] + s[2] / 3), stroke: s[3], "stroke-width": 1, fill: "none", "shape-rendering": "crispEdges" });
  });
})();
```
